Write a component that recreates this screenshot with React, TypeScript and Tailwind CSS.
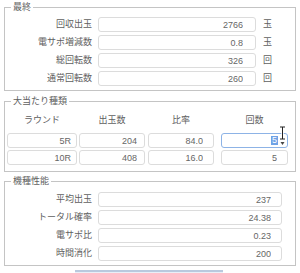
import React from 'react';

const finalRows = [
  { label: '回収出玉', value: '2766', unit: '玉' },
  { label: '電サポ増減数', value: '0.8', unit: '玉' },
  { label: '総回転数', value: '326', unit: '回' },
  { label: '通常回転数', value: '260', unit: '回' },
];

const perfRows = [
  { label: '平均出玉', value: '237' },
  { label: 'トータル確率', value: '24.38' },
  { label: '電サポ比', value: '0.23' },
  { label: '時間消化', value: '200' },
];

const rounds = [
  { round: '5R', out: '204', rate: '84.0', count: '5' },
  { round: '10R', out: '408', rate: '16.0', count: '5' },
];

const inputCls =
  'h-[15px] border border-[#dcdcdc] rounded-[3px] bg-white text-right text-[9px] text-[#666] outline-none';

const Fieldset: React.FC<{ title: string; className?: string; children: React.ReactNode }> = ({
  title,
  className = '',
  children,
}) => (
  <fieldset className={`mx-[4px] border border-[#c4c4c4] ${className}`}>
    <legend className="ml-[6px] px-[2px] text-[9px] leading-[12px] text-[#606060]">{title}</legend>
    {children}
  </fieldset>
);

const App: React.FC = () => {
  return (
    <div className="w-[300px] h-[273px] overflow-hidden bg-white pt-[1px] font-['Liberation_Sans','Noto_Sans_CJK_JP',sans-serif]">
      <Fieldset title="最終">
        <div className="flex flex-col gap-[3px] pt-[4px] pb-[4px]">
          {finalRows.map((r) => (
            <div key={r.label} className="flex items-center h-[15px]">
              <span className="w-[87px] text-right text-[9px] text-[#606060]">{r.label}</span>
              <input readOnly value={r.value} className={`${inputCls} ml-[6px] w-[158px] pr-[12px]`} />
              <span className="ml-[7px] text-[9px] text-[#606060]">{r.unit}</span>
            </div>
          ))}
        </div>
      </Fieldset>

      <Fieldset title="大当たり種類" className="mt-[4px]">
        <div className="pt-[8px] pb-[6px] pl-[2px]">
          <div className="flex h-[12px] items-center text-[9px] text-[#606060]">
            <span className="w-[70px] text-center">ラウンド</span>
            <span className="ml-[2px] w-[66px] text-center">出玉数</span>
            <span className="ml-[3px] w-[66px] text-center">比率</span>
            <span className="ml-[7px] w-[67px] text-center">回数</span>
          </div>
          <div className="mt-[6px] flex flex-col gap-[2px]">
            {rounds.map((r, i) => (
              <div key={r.round} className="flex">
                <input readOnly value={r.round} className={`${inputCls} w-[70px] pr-[5px]`} />
                <input readOnly value={r.out} className={`${inputCls} ml-[2px] w-[66px] pr-[7px]`} />
                <input readOnly value={r.rate} className={`${inputCls} ml-[3px] w-[66px] pr-[10px]`} />
                {i === 0 ? (
                  <div className="relative ml-[7px] w-[67px] h-[15px] border border-[#8db3e6] rounded-[3px] bg-white flex items-center justify-end pr-[2px] text-[9px]">
                    <span className="bg-[#6fa2e6] text-white leading-[9px] px-[1px]">{r.count}</span>
                    <svg width="5" height="10" viewBox="0 0 5 10" className="ml-[2px]">
                      <path d="M0.5 4 L2.5 1 L4.5 4 Z" fill="#444" />
                      <path d="M0.5 6 L2.5 9 L4.5 6 Z" fill="#444" />
                    </svg>
                    <svg
                      width="7"
                      height="14"
                      viewBox="0 0 7 14"
                      className="absolute left-[57px] top-[-8px]"
                    >
                      <path
                        d="M1 1 H6 M3.5 1 V13 M1 13 H6"
                        stroke="#fff"
                        strokeWidth="2.4"
                        fill="none"
                      />
                      <path d="M1 1 H6 M3.5 1 V13 M1 13 H6" stroke="#222" strokeWidth="1" fill="none" />
                    </svg>
                  </div>
                ) : (
                  <input readOnly value={r.count} className={`${inputCls} ml-[7px] w-[67px] pr-[10px]`} />
                )}
              </div>
            ))}
          </div>
        </div>
      </Fieldset>

      <Fieldset title="機種性能" className="mt-[3px]">
        <div className="flex flex-col gap-[3px] pt-[5px] pb-[4px]">
          {perfRows.map((r) => (
            <div key={r.label} className="flex items-center h-[15px]">
              <span className="w-[87px] text-right text-[9px] text-[#606060]">{r.label}</span>
              <input readOnly value={r.value} className={`${inputCls} ml-[6px] w-[184px] pr-[10px]`} />
            </div>
          ))}
        </div>
      </Fieldset>

      <div className="mt-[4px] ml-[75px] w-[148px] h-[10px] border-t-[2px] border-[#b9c9de] bg-[#e9eff7]" />
    </div>
  );
};

export default App;
